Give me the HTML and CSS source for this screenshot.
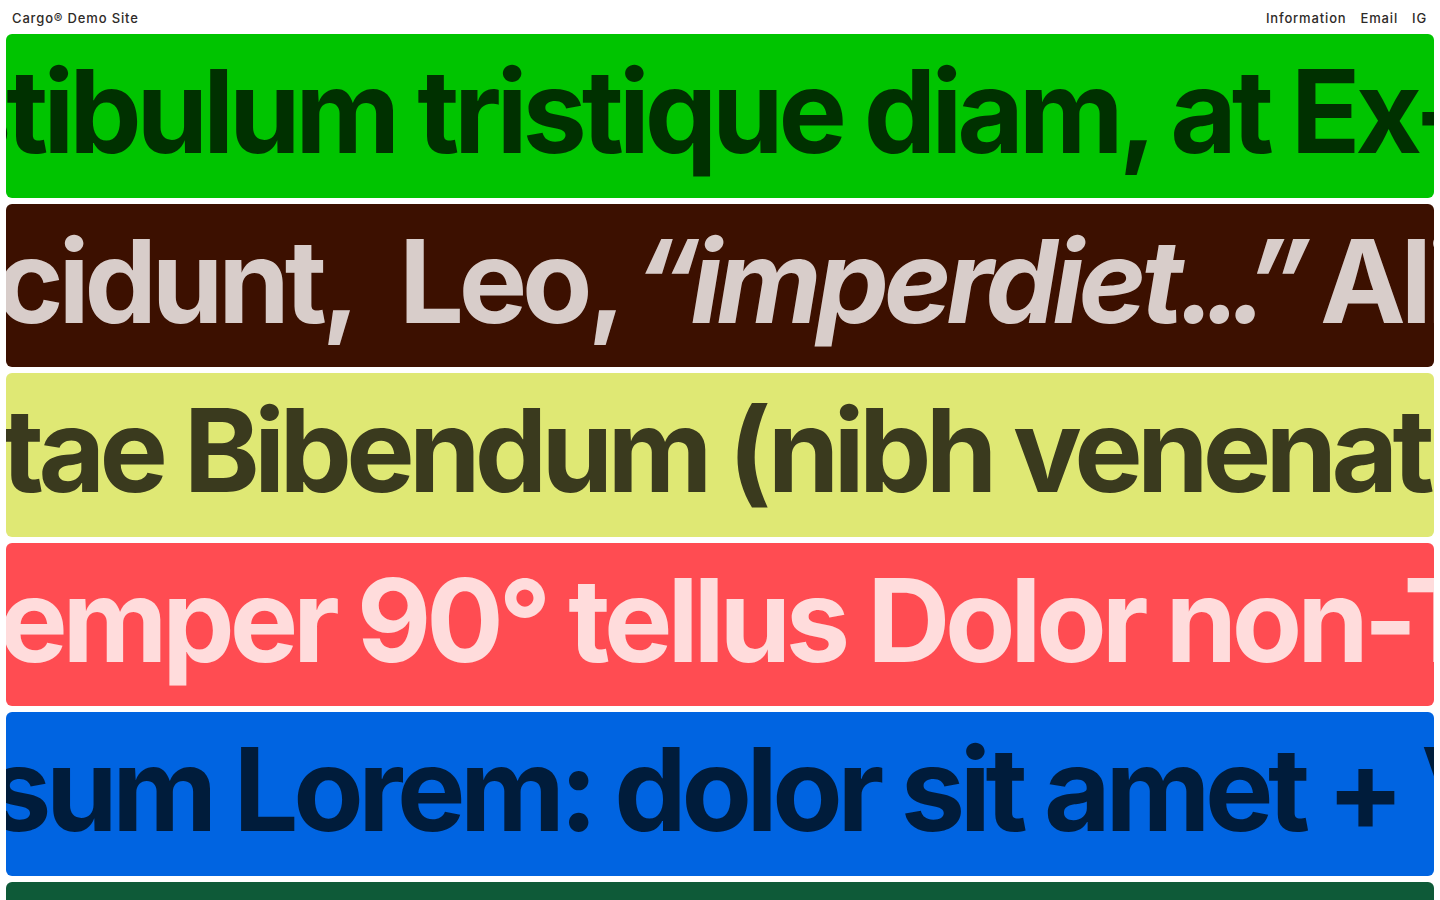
FILE: index.html
```html
<!DOCTYPE html>
<html lang="en">
<head>
    <meta charset="UTF-8">
    <meta name="viewport" content="width=device-width, initial-scale=1.0">
    <title>Cargo® Demo Site</title>
    <link rel="stylesheet" href="styles.css">
</head>
<body>
    <header class="site-header">
        <a class="site-title" href="#">Cargo® Demo Site</a>
        <nav class="site-nav">
            <a href="#">Information</a>
            <a href="#">Email</a>
            <a href="#">IG</a>
        </nav>
    </header>

    <main class="bands">
        <div class="band band-green">
            <span class="ticker t1">Vestibulum tristique diam, at Ex-</span>
        </div>
        <div class="band band-brown">
            <span class="ticker t2">Tincidunt,&nbsp; Leo,<span class="tight"> </span><em><span class="quote">“</span>imperdiet<span class="dots">...”</span></em> Aliquam</span>
        </div>
        <div class="band band-lime">
            <span class="ticker t3">Vitae Bibendum (nibh venenatis)</span>
        </div>
        <div class="band band-red">
            <span class="ticker t4">semper 90° tellus Dolor non-Tempus</span>
        </div>
        <div class="band band-blue">
            <span class="ticker t5">Ipsum Lorem: dolor sit amet + Vel</span>
        </div>
        <div class="band band-pine">
            <span class="ticker t6">Consectetur adipiscing elit</span>
        </div>
    </main>
</body>
</html>
```

FILE: styles.css
```css
body {
    margin: 0;
    padding: 0;
    background: #fff;
    font-family: Inter, 'Noto Sans', sans-serif;
}
a {
    color: inherit;
    text-decoration: none;
}
.site-header {
    height: 34px;
    display: flex;
    align-items: center;
    justify-content: space-between;
    padding: 2px 13px 0 12px;
    box-sizing: border-box;
    font-size: 13px;
    font-weight: 500;
    letter-spacing: 0.065em;
    color: #2e2a28;
}
.site-nav {
    display: flex;
    gap: 14px;
}
.bands {
    display: flex;
    flex-direction: column;
    gap: 6px;
    padding: 0 6px;
}
.band {
    height: 163.5px;
    border-radius: 6px;
    overflow: hidden;
    white-space: nowrap;
    box-sizing: border-box;
    padding-top: 20px;
}
.ticker {
    display: inline-block;
    font-size: 115px;
    line-height: 1;
    font-weight: 700;
    letter-spacing: -0.045em;
}
.ticker em {
    font-style: italic;
}
.ticker .tight {
    letter-spacing: -0.13em;
}
.ticker .quote {
    letter-spacing: -0.08em;
}
.ticker .dots {
    letter-spacing: -0.11em;
}

.band-green { background: #00c400; color: #003100; }
.band-brown { background: #3c1000; color: #d8cdca; }
.band-lime  { background: #dfe874; color: #3a3a1e; }
.band-red   { background: #ff4c52; color: #ffdcdc; }
.band-blue  { background: #0064e1; color: #001c3b; }
.band-pine  { background: #0e5a38; color: #b9e0c8; }

/* scroll offsets of each ticker */
.t1 { margin-left: -196px; }
.t2 { margin-left: -174px; }
.t3 { margin-left: -110px; letter-spacing: -0.05em; }
.t4 { margin-left: -66px; }
.t5 { margin-left: -113px; letter-spacing: -0.047em; }
.t6 { margin-left: -40px; }
```
